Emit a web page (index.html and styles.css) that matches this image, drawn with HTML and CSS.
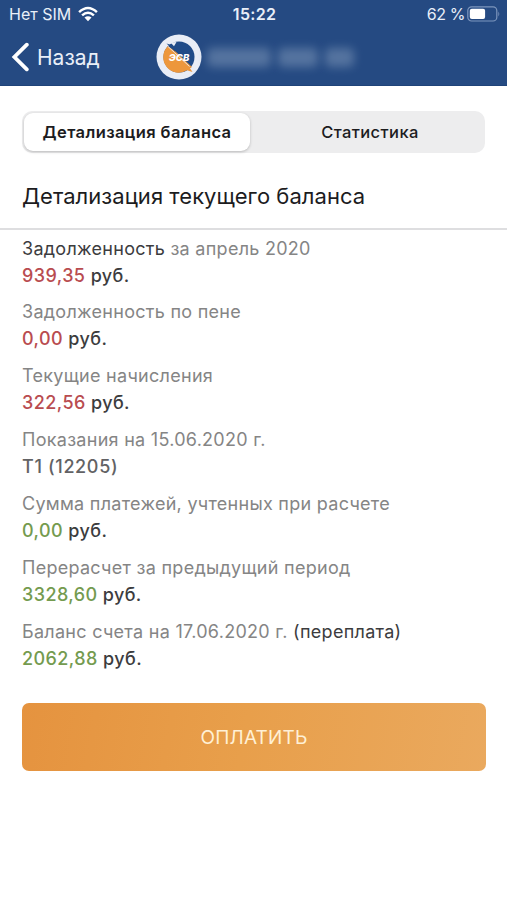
FILE: index.html
```html
<!DOCTYPE html>
<html lang="ru">
<head>
<meta charset="utf-8">
<title>Детализация баланса</title>
<link rel="stylesheet" href="styles.css">
</head>
<body>
<header class="header">
  <div class="status">
    <div class="carrier"><span class="carrier-name">Нет SIM</span>
      <svg class="wifi" width="20" height="16" viewBox="0 0 20 16"><g fill="none" stroke="#fff" stroke-width="2.5"><path d="M1.1 6.1Q10 -2.2 18.9 6.1"/><path d="M4.1 9.4Q10 4 15.9 9.4"/></g><path d="M6.5 11.6Q10 8.7 13.5 11.6L10 15.2Z" fill="#fff"/></svg>
    </div>
    <span class="clock">15:22</span>
    <div class="power"><span class="percent">62 %</span>
      <svg class="battery" width="33" height="16" viewBox="0 0 33 16"><rect x=".8" y=".8" width="29" height="14.2" rx="3.8" fill="none" stroke="#7d96bd" stroke-width="1.2"/><rect x="2.8" y="2.8" width="15.3" height="10.2" rx="2" fill="#fff"/><path d="M31.4 5.5q1.7 2.5 0 5z" fill="#7d96bd"/></svg>
    </div>
  </div>
  <div class="nav">
    <a class="back"><svg width="18" height="30" viewBox="0 0 18 30"><path d="M15.8 2.7L3.4 15L15.8 27.3" fill="none" stroke="#fff" stroke-width="3.8" stroke-linecap="round" stroke-linejoin="miter"/></svg><span class="back-text">Назад</span></a>
    <svg class="logo" width="46" height="46" viewBox="0 0 46 46"><circle cx="23" cy="23" r="22.5" fill="#e9edf6"/><circle cx="23" cy="23" r="15.5" fill="#204b88"/><path d="M12 12A15.5 15.5 0 0 0 31 36.3L36.5 38L34 34.2L36 33L19 17L12 12Z" fill="#ed973c"/><path d="M10.5 9.5L19.5 18L17.5 13.5L20 12.5Z" fill="#204b88"/><path d="M12 12.5L18.5 18.5L33.5 32.5" fill="none" stroke="#e9edf6" stroke-width=".9"/><path d="M14.5 8.5L18 12.3L20.5 8Z" fill="#e9edf6"/><text x="23" y="26.8" text-anchor="middle" class="logo-text">ЭСВ</text></svg>
    <span class="account"><i class="blot blot-a"></i><i class="blot blot-b"></i><i class="blot blot-c"></i></span>
  </div>
</header>
<main>
  <div class="tabs"><button class="tab active">Детализация баланса</button><button class="tab">Статистика</button></div>
  <h1 class="title"><span>Детализация текущего баланса</span></h1>
  <div class="rows">
    <section class="row"><p class="label"><span class="dark">Задолженность</span> за апрель 2020</p><p class="value"><span class="debt">939,35</span> руб.</p></section>
    <section class="row"><p class="label">Задолженность по пене</p><p class="value"><span class="debt">0,00</span> руб.</p></section>
    <section class="row"><p class="label">Текущие начисления</p><p class="value"><span class="debt">322,56</span> руб.</p></section>
    <section class="row"><p class="label">Показания на 15.06.2020 г.</p><p class="value meter">Т1 (12205)</p></section>
    <section class="row"><p class="label">Сумма платежей, учтенных при расчете</p><p class="value"><span class="credit">0,00</span> руб.</p></section>
    <section class="row"><p class="label">Перерасчет за предыдущий период</p><p class="value"><span class="credit">3328,60</span> руб.</p></section>
    <section class="row"><p class="label">Баланс счета на 17.06.2020 г. <span class="dark">(переплата)</span></p><p class="value"><span class="credit">2062,88</span> руб.</p></section>
  </div>
  <button class="pay">ОПЛАТИТЬ</button>
</main>
</body>
</html>
```
FILE: styles.css
```css
* { box-sizing: border-box; margin: 0; padding: 0; }
body { background: #fff; color: #1c1c1e; font-family: Inter, "Liberation Sans", sans-serif; height: 900px; overflow: hidden; }
svg { display: block; flex: none; }
.header { height: 86px; background: #254a82; color: #e9eff8; border-bottom: 1px solid #1f4379; }
.status { height: 28px; display: grid; grid-template-columns: 1fr auto 1fr; align-items: center; padding: 0 7px 0 9px; font-size: 16px; line-height: 20px; }
.carrier, .power { display: flex; align-items: center; }
.carrier { gap: 7px; }
.power { justify-content: flex-end; gap: 3px; }
.percent { letter-spacing: -.4px; margin-right: -1px; }
.clock { font-weight: 600; letter-spacing: .3px; }
.nav { height: 58px; display: flex; align-items: center; padding-left: 11px; }
.back { display: flex; align-items: center; gap: 8px; width: 145px; }
.back-text { font-size: 21px; }
.logo-text { font: italic 800 9.5px Inter, sans-serif; fill: #fff; }
.account { display: flex; gap: 7px; margin-left: 5px; }
.blot { height: 19px; background: #6985ac; filter: blur(5px); opacity: .7; border-radius: 5px; }
.blot-a { width: 64px; }
.blot-b { width: 40px; }
.blot-c { width: 29px; }
.tabs { display: grid; grid-template-columns: 230px 1fr; margin: 25px 22px 0; height: 42px; border-radius: 10px; background: #ededee; }
.tab { border: 0; background: none; font: 500 16.5px Inter, sans-serif; letter-spacing: .4px; color: #1c1c1e; padding-left: 3px; }
.active { padding: 0; font-weight: 600; background: #fff; margin: 2px; border-radius: 9px; box-shadow: 0 1px 3px rgba(0,0,0,.22); }
.title { height: 77px; padding: 28px 22px 0; border-bottom: 2px solid #dedee0; font-size: 22px; line-height: 30px; font-weight: 400; letter-spacing: .04px; }
.rows { display: grid; gap: 9.9px; padding: 4.6px 22px 0; }
.row { height: 54px; font-size: 18px; line-height: 27px; white-space: nowrap; }
.label { color: #858585; letter-spacing: .28px; }
.dark { color: #3c3c3e; }
.value { color: #3c3c3e; font-weight: 500; letter-spacing: .42px; }
.meter { color: #626264; letter-spacing: .65px; }
.debt { color: #b94c50; }
.credit { color: #749b4f; }
.pay { display: block; width: 464px; height: 68px; margin: 31px 0 0 22px; padding-top: 1px; border: 0; border-radius: 7px; background: linear-gradient(100deg, #e5933f, #e89f4b 48%, #eaa95e); color: #fff0d5; font: 400 19px Inter, sans-serif; letter-spacing: .2px; }
```
